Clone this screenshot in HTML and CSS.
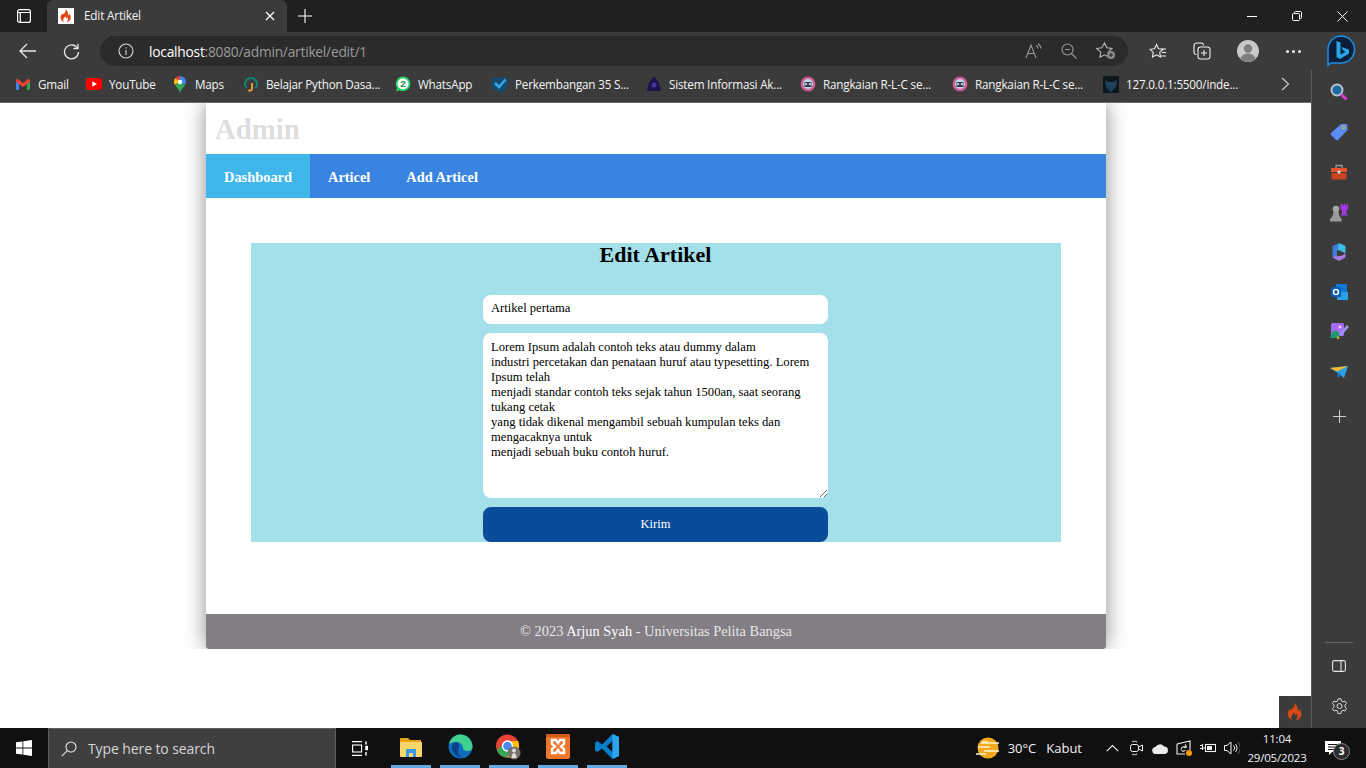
FILE: index.html
```html
<!DOCTYPE html>
<html lang="id">
<head>
<meta charset="utf-8">
<title>Edit Artikel</title>
<link rel="stylesheet" href="styles.css">
</head>
<body>
<svg class="defs" width="0" height="0" aria-hidden="true">
  <symbol id="ci" viewBox="0 0 16 18"><path fill="#dd4814" d="M7.2 0c1 2.6-.3 4-1.6 5.400C4 7 3.300 7.700 3.100 6 1.500 7.300.6 9.300.8 11.300c.2 3 2.400 5.500 5.400 6.200-1.500-1-2.300-2.500-1.900-4 .4-1.600 1.900-2.300 2.600-4.300 1.100 1.300 1.400 2.200 1.300 3 .900-.2 1.400-.9 1.500-1.900 1.300 1.900 1.100 5.100-1 7.200 3-.5 5.600-3 5.700-6.200.1-2-.9-4-2.500-5.200.1 1.200-.4 2-1.200 2.300C11 5.700 10.500 2 7.200 0z"/></symbol>
  <symbol id="rk" viewBox="0 0 16 16"><circle cx="8" cy="8" r="7.500" fill="#d15c92"/><circle cx="8" cy="8" r="5" fill="#b8dfe8"/><path fill="#3d3a55" d="M4.500 6h7v5h-7z"/><circle cx="6" cy="8" r="1" fill="#fff"/><circle cx="10" cy="8" r="1" fill="#fff"/></symbol>
</svg>
<div class="screen">
  <header class="tabstrip">
    <div class="tabactions">
      <svg width="16" height="16" viewBox="0 0 16 16" fill="none" stroke="#fff" stroke-width="1.200"><rect x="1.600" y="1.600" width="12.800" height="12.800" rx="2"/><path d="M1.600 4.500h12.800M4.300 4.500v9.900"/></svg>
    </div>
    <div class="tab">
      <span class="favicon"><svg width="12" height="14"><use href="#ci"/></svg></span>
      <span class="tabtitle">Edit Artikel</span>
      <svg class="tabclose" width="10" height="10" viewBox="0 0 10 10" stroke="#fff" stroke-width="1.300"><path d="M1 1l8 8M9 1l-8 8"/></svg>
    </div>
    <svg class="newtab" width="14" height="14" viewBox="0 0 14 14" stroke="#fff" stroke-width="1.100"><path d="M7 0v14M0 7h14"/></svg>
    <div class="winbtns">
      <svg width="10" height="10" viewBox="0 0 10 10" stroke="#fff" stroke-width="1"><path d="M0 5.500h10"/></svg>
      <svg width="10" height="10" viewBox="0 0 10 10" fill="none" stroke="#fff" stroke-width="1"><rect x=".5" y="2.500" width="7" height="7" rx="1"/><path d="M2.500 2.500V1.500a1 1 0 0 1 1-1h5a1 1 0 0 1 1 1v5a1 1 0 0 1-1 1h-1"/></svg>
      <svg width="11" height="11" viewBox="0 0 11 11" stroke="#fff" stroke-width="1"><path d="M.5.500l10 10M10.500.500l-10 10"/></svg>
    </div>
  </header>

  <div class="toolbar">
    <svg class="tb-back" width="18" height="16" viewBox="0 0 18 16" fill="none" stroke="#e8e8e8" stroke-width="1.300"><path d="M17 8H1M8 1L1 8l7 7"/></svg>
    <svg class="tb-reload" width="17" height="17" viewBox="0 0 17 17" fill="none" stroke="#e8e8e8" stroke-width="1.300"><path d="M14.500 5.200A7 7 0 1 0 15.500 9"/><path d="M15 .8v4.700h-4.700"/></svg>
    <div class="omnibox">
      <svg class="omni-info" width="16" height="16" viewBox="0 0 16 16" fill="none" stroke="#d8d8d8" stroke-width="1.100"><circle cx="8" cy="8" r="7"/><path d="M8 7v5M8 4.200v1.300"/></svg>
      <span class="url"><b>localhost</b>:8080/admin/artikel/edit/1</span>
      <div class="omni-right">
        <svg width="17" height="16" viewBox="0 0 17 16" fill="none" stroke="#9a9a9a" stroke-width="1.100"><path d="M1 15L6 2l5 13M2.800 10.500h6.400"/><path d="M11 2.500c1.300.7 2 1.800 2 3M13 .8c1.700 1 2.700 2.700 2.700 4.600"/></svg>
        <svg width="16" height="16" viewBox="0 0 16 16" fill="none" stroke="#9a9a9a" stroke-width="1.100"><circle cx="6.500" cy="6.500" r="5.500"/><path d="M4 6.500h5M10.500 10.500l5 5"/></svg>
        <svg width="20" height="18" viewBox="0 0 20 18" fill="none" stroke="#b5b5b5" stroke-width="1.100"><path d="M8.500 1l2.300 4.800 5.200.7-3.800 3.600 1 5.200-4.700-2.500-4.600 2.500.9-5.200L.5 6.500l5.300-.7z"/><circle cx="15" cy="13" r="4" fill="#8a8a8a" stroke="none"/><path d="M13 13h4M15 11v4" stroke="#2b2b2b"/></svg>
      </div>
    </div>
    <div class="tb-right">
      <svg width="18" height="17" viewBox="0 0 18 17" fill="none" stroke="#f0f0f0" stroke-width="1.100"><path d="M7.500 1.500l2 4.200 4.500.6-3.300 3.100.8 4.600-4-2.200-4 2.200.8-4.600L1 6.300l4.500-.6z"/><path d="M12 6h5M13 9.500h4M12 13h5"/></svg>
      <svg width="18" height="18" viewBox="0 0 18 18" fill="none" stroke="#f0f0f0" stroke-width="1.100"><path d="M3.500 12.500A2.500 2.500 0 0 1 1 10V4a3 3 0 0 1 3-3h4a2.500 2.500 0 0 1 2.500 2.500"/><rect x="5" y="5" width="12" height="12" rx="2.500"/><path d="M11 8v6M8 11h6"/></svg>
      <svg class="avatar" width="22" height="22" viewBox="0 0 22 22"><circle cx="11" cy="11" r="11" fill="#c9c9c9"/><circle cx="11" cy="8.500" r="4.200" fill="#7e7e7e"/><path d="M3.500 19c1-4 4-5.500 7.500-5.500s6.500 1.500 7.500 5.500a11 11 0 0 1-15 0z" fill="#7e7e7e"/></svg>
      <span class="more"><i></i><i></i><i></i></span>
    </div>
    <svg class="bing" width="30" height="32" viewBox="0 0 30 32"><path d="M15 1a13.500 13.500 0 0 1 0 27H5l-3 2V15A13.500 13.500 0 0 1 15 1z" fill="#0d1d3a" stroke="#1b8ee0" stroke-width="1.600"/><path d="M10.500 6l4 1.500v12l5-2.800-2.500-1.200-1.500-3.500 7.500 2.800v3.700l-9 5.500-3.500-2z" fill="#27a6e8"/></svg>
  </div>

  <div class="midrow">
    <div class="browsercol">
      <nav class="bookmarks">
        <a class="bm"><svg width="14" height="11" viewBox="0 0 14 11"><path fill="#ea4335" d="M0 1.500C0 .2 1.400-.4 2.300.3L7 4 11.700.3C12.600-.4 14 .2 14 1.500L14 3 7 8 0 3z"/><path fill="#4285f4" d="M0 3l3 2v6H1a1 1 0 0 1-1-1z"/><path fill="#34a853" d="M14 3l-3 2v6h2a1 1 0 0 0 1-1z"/></svg><span>Gmail</span></a>
        <a class="bm"><svg width="16" height="12" viewBox="0 0 16 12"><rect width="16" height="12" rx="3" fill="#f00"/><path fill="#fff" d="M6.300 3.300v5.400L11 6z"/></svg><span>YouTube</span></a>
        <a class="bm"><svg width="14" height="17" viewBox="0 0 14 17"><path fill="#4285f4" d="M7 0a6 6 0 0 1 6 6c0 1-.3 2-.8 2.700L7 6z"/><path fill="#ea4335" d="M7 0a6 6 0 0 0-4.500 2L7 6z"/><path fill="#fbbc04" d="M2.500 2A6 6 0 0 0 1 6c0 1.100.4 2 .8 2.800L7 6z"/><path fill="#34a853" d="M1.800 8.800C3.500 11.500 6 13 7 17c1-4 3.500-5.500 5.200-8.300L7 6z"/><circle cx="7" cy="6" r="2.200" fill="#fff"/></svg><span>Maps</span></a>
        <a class="bm"><svg width="14" height="15" viewBox="0 0 14 15" fill="none" stroke-width="2"><path stroke="#0f8a70" d="M2.500 11A6 6 0 1 1 11.500 11"/><path stroke="#e79a3c" d="M8 6v6a2 2 0 0 1-3.500 1"/></svg><span>Belajar Python Dasa...</span></a>
        <a class="bm"><svg width="18" height="18" viewBox="0 0 18 18"><path fill="#25d366" d="M9 .5a8.300 8.300 0 0 1 0 16.600c-1.400 0-2.700-.3-3.900-1L1 17.500l1.400-4A8.300 8.300 0 0 1 9 .5z"/><circle cx="9" cy="8.800" r="6.200" fill="#fff"/><text x="9" y="12.500" class="wa">2</text></svg><span>WhatsApp</span></a>
        <a class="bm"><svg width="16" height="17" viewBox="0 0 16 17"><path fill="#144a6e" d="M0 1.500h16v7c0 4-4 6.500-8 8.500-4-2-8-4.500-8-8.500z"/><path fill="none" stroke="#35a7e6" stroke-width="2.600" d="M3 7l4 4 6.500-7.500"/></svg><span>Perkembangan 35 S...</span></a>
        <a class="bm"><svg width="14" height="17" viewBox="0 0 14 17"><path fill="#1c1250" d="M7 0l5 7 2 8H0l2-8z"/><circle cx="7" cy="9" r="2.500" fill="#453a9c"/></svg><span>Sistem Informasi Ak...</span></a>
        <a class="bm"><svg width="16" height="16"><use href="#rk"/></svg><span>Rangkaian R-L-C se...</span></a>
        <a class="bm"><svg width="16" height="16"><use href="#rk"/></svg><span>Rangkaian R-L-C se...</span></a>
        <a class="bm"><svg width="16" height="17" viewBox="0 0 16 17"><rect width="16" height="17" fill="#0b1820"/><path fill="#1f4257" d="M2 4l3 2h6l3-2-1 7-5 5-5-5z"/></svg><span>127.0.0.1:5500/inde...</span></a>
        <svg class="bm-more" width="9" height="14" viewBox="0 0 9 14" fill="none" stroke="#c8c8c8" stroke-width="1.200"><path d="M1 1l6.500 6L1 13"/></svg>
      </nav>

      <main class="viewport">
        <div class="site">
          <div class="site-head"><h1>Admin</h1></div>
          <nav class="site-nav">
            <a class="active">Dashboard</a>
            <a>Articel</a>
            <a>Add Articel</a>
          </nav>
          <section class="content">
            <form class="panel">
              <h2>Edit Artikel</h2>
              <input class="field" type="text" value="Artikel pertama">
              <textarea class="field area">Lorem Ipsum adalah contoh teks atau dummy dalam
industri percetakan dan penataan huruf atau typesetting. Lorem Ipsum telah
menjadi standar contoh teks sejak tahun 1500an, saat seorang tukang cetak
yang tidak dikenal mengambil sebuah kumpulan teks dan mengacaknya untuk
menjadi sebuah buku contoh huruf.</textarea>
              <button class="send" type="button">Kirim</button>
            </form>
          </section>
          <footer class="site-foot"><span>© 2023 <b>Arjun Syah</b> - Universitas Pelita Bangsa</span></footer>
        </div>
        <div class="ci-bar"><svg width="16" height="18"><use href="#ci"/></svg></div>
      </main>
    </div>

    <aside class="sidebar">
      <div class="side-icons">
        <div class="side-cell"><svg width="18" height="18" viewBox="0 0 18 18"><circle cx="7" cy="7" r="5.500" fill="#1c6aa0" stroke="#b9c2c8" stroke-width="2"/><path d="M11.500 11.500l5 5" stroke="#d63be0" stroke-width="3"/></svg></div>
        <div class="side-cell"><svg width="18" height="18" viewBox="0 0 18 18"><path fill="#5b8cf5" d="M11 1h5a1.500 1.500 0 0 1 1.500 1.500V7L8 17a1.500 1.500 0 0 1-2 0L1 12a1.500 1.500 0 0 1 0-2z"/><circle cx="13.500" cy="4.500" r="1.500" fill="none" stroke="#f0c020"/></svg></div>
        <div class="side-cell"><svg width="18" height="16" viewBox="0 0 18 16"><path fill="none" stroke="#9b9b9b" stroke-width="1.300" d="M6 4V1.500h6V4"/><path fill="#e8532d" d="M1 4h16v4H1z"/><path fill="#c9431f" d="M1.500 9h15v5a1.500 1.500 0 0 1-1.500 1.500H3A1.500 1.500 0 0 1 1.500 14z"/><rect x="7.500" y="6.500" width="3" height="3" rx="1" fill="#ddd"/></svg></div>
        <div class="side-cell"><svg width="19" height="19" viewBox="0 0 19 19"><circle cx="6" cy="6" r="3.300" fill="#a8a8a8"/><path fill="#9a9a9a" d="M3.500 9h5l1 4 2 3v2.500H0V16l2.500-3z"/><path fill="#a338e8" d="M10.500 1h1.800v1.600h1.400V1h1.600v1.600h1.400V1H18v5l-1.500 1v4l1.500 1.500H10.500L12 11V7l-1.500-1z"/></svg></div>
        <div class="side-cell"><svg width="18" height="18" viewBox="0 0 18 18"><path fill="#3f7ad9" d="M9 0L2.500 3v11.500L7 12V7z"/><path fill="#3dbce8" d="M9 0l6.500 3v7.500L11 8 7 7z"/><path fill="#a67ae0" d="M2.500 14.500L9 18l6.500-3.500v-4L11 13l-4-1z"/><path fill="#3b3b3b" d="M7 7l4 1.500V12l-4 1.500z"/></svg></div>
        <div class="side-cell"><svg width="17" height="16" viewBox="0 0 17 16"><path fill="#0f78d4" d="M5 0h11v8H5z"/><path fill="#2aa0e8" d="M6 8h11v7a1 1 0 0 1-1 1H6z"/><rect y="3" width="10" height="10" rx="1" fill="#0a5fb4"/><circle cx="5" cy="8" r="2.500" fill="none" stroke="#fff" stroke-width="1.400"/></svg></div>
        <div class="side-cell"><svg width="19" height="18" viewBox="0 0 19 18"><rect x="1" y="0" width="13" height="13" rx="1.500" fill="#a46cf0"/><circle cx="10" cy="4" r="1.500" fill="#f3d5ff"/><path fill="#1e9a6a" d="M0 15l3-7c2-1 5 0 7 3l-2 4z"/><path fill="#9898f0" d="M9 11l8-9 2 2-8 9z"/><path fill="#f0b020" d="M7.500 12.500L10 15l-3 1.500z"/></svg></div>
        <div class="side-cell"><svg width="18" height="13" viewBox="0 0 18 13"><path fill="#2aa0e8" d="M0 2l18-2-4 12-6-5z"/><path fill="#f6b830" d="M0 2l18-2L7 5.500z"/><path fill="#0f78d4" d="M7 5.500l1 7 2.500-4z"/></svg></div>
        <div class="side-cell side-add"><svg width="13" height="13" viewBox="0 0 13 13" stroke="#d0d0d0" stroke-width="1"><path d="M6.500 0v13M0 6.500h13"/></svg></div>
      </div>
      <div class="side-bottom">
        <hr>
        <svg width="14" height="12" viewBox="0 0 14 12" fill="none" stroke="#e4e4e4" stroke-width="1.100"><rect x=".6" y=".6" width="12.800" height="10.800" rx="1.800"/><path d="M9 .6v10.800"/></svg>
        <svg width="17" height="17" viewBox="0 0 17 17" fill="none" stroke="#d8d8d8" stroke-width="1"><path d="M7 .8h3l.5 2.200 1.500.8 2-.8 1.500 2.600-1.600 1.500v1.800l1.600 1.500L14 13l-2-.8-1.500.8-.5 2.500H7L6.500 13 5 12.200l-2 .8-1.500-2.600L3 8.900V7.100L1.500 5.600 3 3l2 .8L6.500 3z"/><circle cx="8.500" cy="8" r="2.500"/></svg>
      </div>
    </aside>
  </div>

  <footer class="taskbar">
    <div class="start"><svg width="16" height="16" viewBox="0 0 16 16" fill="#fff"><path d="M0 2.300l6.500-.9v6.200H0zM7.300 1.300L16 0v7.600H7.300zM0 8.400h6.500v6.200L0 13.700zM7.300 8.400H16V16l-8.700-1.300z"/></svg></div>
    <div class="search">
      <svg width="16" height="16" viewBox="0 0 16 16" fill="none" stroke="#e8e8e8" stroke-width="1.100"><circle cx="10" cy="6" r="5"/><path d="M6.300 9.700L.8 15.200"/></svg>
      <span>Type here to search</span>
    </div>
    <div class="taskview"><svg width="16" height="15" viewBox="0 0 16 15" fill="none" stroke="#fff" stroke-width="1.100"><path d="M0 .6h10M0 14.400h10"/><rect x=".6" y="4" width="9" height="7"/><path d="M14 .5v3M14 5.500h1.500v3H14zM14 11v3.500" stroke-width="1.500"/></svg></div>
    <div class="apps">
      <div class="app"><svg width="22" height="22" viewBox="0 0 22 22"><path fill="#e8a317" d="M0 3a1 1 0 0 1 1-1h7l2 2h11v4H0z"/><path fill="#f9d669" d="M0 6h22v14a1 1 0 0 1-1 1H1a1 1 0 0 1-1-1z"/><path fill="#3a9ae8" d="M6 13h10v8h-3v-4H9v4H6z"/></svg></div>
      <div class="app"><svg width="25" height="25" viewBox="0 0 25 25"><circle cx="12.500" cy="12.500" r="12" fill="#0f6cbd"/><path fill="#3fd08b" d="M1 10C3 3 8 .5 12.500.5 19 .5 24.500 6 24.500 13c0 2-1.500 4-5 4-3 0-4.500-1-4.500-3 0-3-3-6-6.500-6S2.500 9 1 10z"/><path fill="#0a3f86" d="M8.500 8C5 8 3.500 12 4 15c1 5 6 9 11 8.500-3-1-5-3-5-7 0-3 1-4 1-6-.5-1.500-1.500-2.500-2.500-2.500z"/></svg></div>
      <div class="app"><svg width="26" height="26" viewBox="0 0 26 26"><circle cx="11.500" cy="12" r="11.500" fill="#ea4335"/><path fill="#34a853" d="M.8 16A11.500 11.500 0 0 0 11 23.500L17 12H5z"/><path fill="#fbbc04" d="M11.500 7H22a11.500 11.500 0 0 1-11 16.500L17 13z"/><circle cx="11.500" cy="12" r="5" fill="#4a8af4" stroke="#fff" stroke-width="1.500"/><circle cx="18" cy="19" r="6.500" fill="#77716a"/><circle cx="18" cy="16.500" r="2" fill="#ddd"/><path fill="#ddd" d="M15.500 24c0-3 1-5 2.500-5s2.500 2 2.500 5z"/></svg></div>
      <div class="app"><svg width="24" height="25" viewBox="0 0 24 25"><rect width="24" height="25" rx="2" fill="#f0772a"/><rect y="0" width="24" height="3" fill="#cf5b16"/><path fill="none" stroke="#fff" stroke-width="2.400" d="M6 6h4l2 3 2-3h4v4l-3 2.500 3 2.500v4h-4l-2-3-2 3H6v-4l3-2.500L6 10z"/></svg></div>
      <div class="app"><svg width="24" height="25" viewBox="0 0 24 25"><path fill="#0a7ecb" d="M17.500 0L24 3v19l-6.500 3L7 14.500 2.500 18 0 16.500V8.500L2.500 7 7 10.500zM17.500 7l-6 5.500 6 5.500z"/><path fill="#2aa5ee" d="M17.500 0L24 3v19l-6.500 3z"/></svg></div>
    </div>
    <div class="tray">
      <div class="weather">
        <svg width="24" height="22" viewBox="0 0 24 22"><circle cx="12" cy="11" r="10.500" fill="#f5a81c"/><path d="M5 6h18M2 10h12M8 14h15M0 17h10M6 5h6" stroke="#fff3d0" stroke-width="1.500"/></svg>
        <span class="temp">30°C</span><span class="cond">Kabut</span>
      </div>
      <div class="t-cell"><svg width="13" height="8" viewBox="0 0 13 8" fill="none" stroke="#f0f0f0" stroke-width="1.200"><path d="M.8 7.200L6.500 1.500l5.700 5.700"/></svg></div>
      <div class="t-cell"><svg width="13" height="16" viewBox="0 0 13 16" fill="none" stroke="#f0f0f0" stroke-width="1"><rect x=".5" y="4.500" width="8" height="7" rx="2"/><path d="M8.500 7l4-2v6l-4-2M2 2c2-1 3-1 5 0M2 14c2 1 3 1 5 0"/></svg></div>
      <div class="t-cell"><svg width="17" height="11" viewBox="0 0 17 11"><path fill="#ececec" d="M4 11a3.500 3.500 0 0 1-.5-7A5 5 0 0 1 12 3.500 3.800 3.800 0 0 1 13 11z"/></svg></div>
      <div class="t-cell"><svg width="17" height="17" viewBox="0 0 17 17" fill="none" stroke="#f0f0f0" stroke-width="1.100"><path d="M1 4l13-3v9M1 4v10h8"/><path d="M5 9.500a3 3 0 0 1 5-2M9 4.500L10.500 7l-2.500.5M9.500 10a3 3 0 0 1-4 .5"/><circle cx="13" cy="13" r="3" fill="#f79a0b" stroke="none"/></svg></div>
      <div class="t-cell"><svg width="16" height="12" viewBox="0 0 16 12" fill="none" stroke="#f0f0f0" stroke-width="1.100"><rect x="5.500" y="2.500" width="10" height="7"/><rect x="7" y="4" width="5" height="4" fill="#f0f0f0" stroke="none"/><path d="M0 3.500h3M0 6.500h3M2.500 2v6M5.500 6H3"/></svg></div>
      <div class="t-cell"><svg width="16" height="14" viewBox="0 0 16 14" fill="none" stroke="#f0f0f0" stroke-width="1"><path d="M.5 4.500h2.500L7 1v12L3 9.500H.5zM9.500 4.500a3.500 3.500 0 0 1 0 5M11.500 3a6 6 0 0 1 0 8"/><path d="M14 1a9 9 0 0 1 0 12" stroke="#666"/></svg></div>
      <div class="clock"><span>11:04</span><span>29/05/2023</span></div>
      <div class="notif">
        <svg width="16" height="15" viewBox="0 0 16 15"><path fill="#fff" d="M0 0h16v11H7l-3 3v-3H0z"/><path stroke="#111" stroke-width="1" d="M3 3.500h10M3 6h10M3 8.500h7"/></svg>
        <span class="badge">3</span>
      </div>
    </div>
  </footer>
</div>
</body>
</html>
```

FILE: styles.css
```css
* { box-sizing: border-box; }
html, body { margin: 0; padding: 0; }
body { width: 1366px; height: 768px; overflow: hidden; font-family: "Open Sans", "Noto Sans", sans-serif; }
.defs { position: absolute; }
svg { display: block; flex: none; }
.screen { display: flex; flex-direction: column; width: 1366px; height: 768px; }

/* tab strip */
.tabstrip { display: flex; align-items: center; height: 32px; background: #202020; }
.tabactions { width: 47px; height: 32px; display: flex; align-items: center; padding-left: 16px; }
.tab { display: flex; align-items: center; width: 240px; height: 32px; background: #3b3b3b; border-radius: 6px 6px 0 0; padding-left: 11px; color: #f2f2f2; }
.favicon { width: 16px; height: 16px; background: #fff; display: flex; align-items: center; justify-content: center; }
.tabtitle { font-size: 11.800px; margin-left: 10px; flex: 1; letter-spacing: -.2px; padding-bottom: 2px; }
.tabclose { margin-right: 12px; }
.newtab { margin-left: 11px; }
.winbtns { margin-left: auto; display: flex; align-items: center; gap: 35px; padding-right: 18px; }

/* toolbar */
.toolbar { display: flex; align-items: center; height: 38px; background: #3b3b3b; }
.tb-back { margin-left: 19px; }
.tb-reload { margin-left: 26px; }
.omnibox { display: flex; align-items: center; width: 1028px; height: 30px; margin-left: 20px; background: #2b2b2b; border-radius: 15px; padding-left: 18px; }
.url { font-size: 13.800px; margin-left: 15px; color: #9a9a9a; letter-spacing: -.25px; }
.url b { font-weight: 400; color: #fff; }
.omni-right { margin-left: auto; display: flex; align-items: center; gap: 19px; padding-right: 12px; }
.tb-right { display: flex; align-items: center; margin-left: 21px; gap: 26px; }
.more { display: flex; gap: 3px; margin-left: 1px; }
.more i { width: 3px; height: 3px; background: #f0f0f0; border-radius: 50%; }
.bing { margin-left: 25px; }

/* middle */
.midrow { display: flex; height: 658px; }
.browsercol { display: flex; flex-direction: column; width: 1311px; }
.bookmarks { display: grid; grid-template-columns: 71px 86px 71px 152px 97px 154px 154px 152px 151px 178px 16px; align-items: center; height: 33px; padding: 0 0 4px 15px; background: #3b3b3b; border-bottom: 1px solid #6a6a6a; }
.bm { display: flex; align-items: center; color: #f4f4f4; font-size: 11.700px; letter-spacing: -.2px; white-space: nowrap; }
.bm svg { width: 16px; margin-right: 7px; }
.bm-more { justify-self: start; }
.wa { font: 700 11px "Liberation Sans", sans-serif; fill: #128c4e; text-anchor: middle; }

.viewport { position: relative; flex: 1; background: #fff; }
.site { display: flex; flex-direction: column; width: 900px; height: 546px; margin-left: 206px; background: #fff; box-shadow: 0 0 20px rgba(0, 0, 0, .45); clip-path: inset(0 -30px); font-family: "Liberation Serif", "Times New Roman", serif; }
.site-head { height: 51px; padding: 10px 9px 0; }
h1 { margin: 0; font-size: 28.800px; line-height: 32px; font-weight: 700; color: #dedede; }
.site-nav { display: flex; height: 44px; background: #3984e0; }
.site-nav a { display: flex; align-items: center; padding: 2px 18px 0; color: #fff; font-size: 14.400px; font-weight: 700; }
.site-nav a.active { background: #41b6ea; }
.content { flex: 1; padding: 45px 45px 72px; }
.panel { display: flex; flex-direction: column; align-items: center; height: 299px; padding-right: 1px; background: #a4e0e9; }
h2 { margin: 0 0 27px; height: 25px; font-size: 22px; line-height: 23px; font-weight: 700; color: #000; }
.field { display: block; width: 345px; height: 29px; padding: 6px 8px 8px; border: 0; border-radius: 8px; background: #fff; color: #000; font: 12.600px/15px "Liberation Serif", "Times New Roman", serif; outline: none; }
.area { height: 165px; margin-top: 9px; padding-top: 7px; resize: vertical; }
.send { width: 345px; height: 35px; margin-top: 9px; padding-bottom: 2px; border: 0; border-radius: 8px; background: #094c9a; color: #fff; font: 12.500px "Liberation Serif", "Times New Roman", serif; }
.site-foot { display: flex; align-items: center; justify-content: center; height: 35px; background: #837e85; color: #e6e6e6; font-size: 14.400px; border-radius: 0 0 3px 3px; }
.site-foot b { font-weight: 400; color: #fff; }
.ci-bar { position: absolute; right: 0; bottom: 0; display: flex; align-items: center; justify-content: center; width: 32px; height: 32px; background: #3b3b3b; }

/* sidebar */
.sidebar { display: flex; flex-direction: column; width: 55px; background: #3b3b3b; border-left: 1px solid #5c5c5c; }
.side-icons { display: flex; flex-direction: column; padding-top: 2px; }
.side-cell { display: flex; align-items: center; justify-content: center; height: 40px; }
.side-add { margin-top: 4px; }
.side-bottom { margin-top: auto; display: flex; flex-direction: column; align-items: center; padding-bottom: 13px; }
.side-bottom hr { width: 28px; height: 1px; margin: 0 0 17px; border: 0; background: #666; }
.side-bottom svg + svg { margin-top: 26px; }

/* taskbar */
.taskbar { display: flex; align-items: center; height: 40px; background: #101010; color: #f2f2f2; }
.start { display: flex; align-items: center; justify-content: center; width: 48px; height: 40px; }
.search { display: flex; align-items: center; gap: 11px; width: 288px; height: 40px; padding-left: 12px; background: #3f3f3f; border: 1px solid #5e5e5e; border-bottom: 0; color: #d6d6d6; font-size: 14px; letter-spacing: -.1px; }
.taskview { width: 16px; margin-left: 16px; }
.apps { display: flex; gap: 9px; margin-left: 23px; }
.app { display: flex; align-items: center; justify-content: center; width: 40px; height: 40px; border-bottom: 3px solid #62a8e5; }
.tray { display: flex; align-items: center; margin-left: auto; height: 40px; }
.weather { display: flex; align-items: center; margin-right: 18px; font-size: 13px; }
.temp { margin-left: 8px; }
.cond { margin-left: 10px; }
.t-cell { display: flex; align-items: center; justify-content: center; width: 24px; height: 40px; }
.clock { display: flex; flex-direction: column; align-items: center; gap: 3px; width: 66px; font-size: 11.500px; line-height: 16px; letter-spacing: -.2px; }
.notif { position: relative; width: 32px; margin: 0 15px 0 9px; padding-left: 6px; }
.badge { position: absolute; left: 14px; top: 2px; width: 17px; height: 17px; border-radius: 50%; background: #2c2c2c; border: 1px solid #8a8a8a; color: #fff; font-size: 10px; font-weight: 700; line-height: 15px; text-align: center; }
```
